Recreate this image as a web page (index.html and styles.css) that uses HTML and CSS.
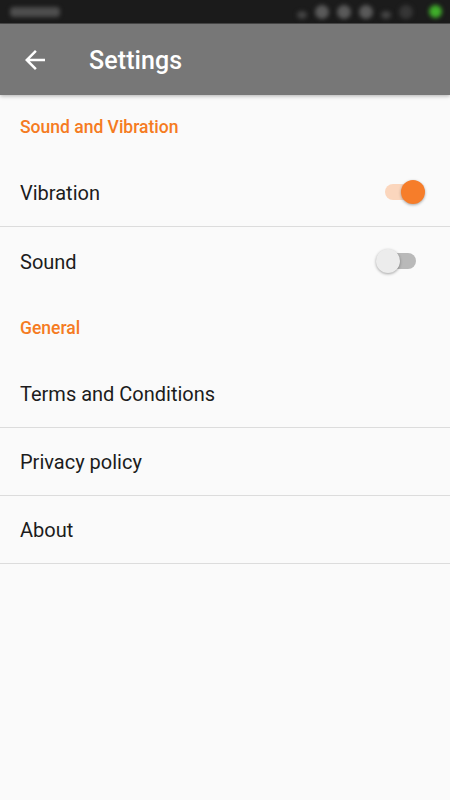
FILE: index.html
```html
<!DOCTYPE html>
<html>
<head>
<meta charset="utf-8">
<link rel="stylesheet" href="styles.css">
</head>
<body>
<div class="statusbar">
  <div class="sb-left"><span class="blob time"></span></div>
  <div class="sb-right">
    <span class="blob dot small"></span>
    <span class="blob dot"></span>
    <span class="blob dot"></span>
    <span class="blob dot"></span>
    <span class="blob dot small"></span>
    <span class="blob dot dim"></span>
    <span class="blob dot green"></span>
  </div>
</div>
<header class="toolbar">
  <span class="nav-icon">
    <svg width="30" height="30" viewBox="0 0 24 24"><path fill="#fff" d="M20 11H7.83l5.59-5.59L12 4l-8 8 8 8 1.41-1.41L7.83 13H20v-2z"/></svg>
  </span>
  <h1 class="title">Settings</h1>
</header>
<main class="list">
  <div class="section-header">Sound and Vibration</div>
  <div class="row divided">
    <span class="label">Vibration</span>
    <span class="switch on"><span class="track"></span><span class="thumb"></span></span>
  </div>
  <div class="row plain">
    <span class="label">Sound</span>
    <span class="switch"><span class="track"></span><span class="thumb"></span></span>
  </div>
  <div class="section-header">General</div>
  <div class="row divided"><span class="label">Terms and Conditions</span></div>
  <div class="row divided"><span class="label">Privacy policy</span></div>
  <div class="row divided"><span class="label">About</span></div>
</main>
</body>
</html>
```
FILE: styles.css
```css
* { box-sizing: border-box; }
html, body {
  margin: 0;
  padding: 0;
  background: #fafafa;
  font-family: Roboto, "Liberation Sans", sans-serif;
}
body { width: 450px; min-height: 800px; }

.statusbar {
  height: 24px;
  background: #1b1b1b;
  border-bottom: 1px solid #4a4a4a;
  display: flex;
  justify-content: space-between;
  align-items: center;
  padding: 0 8px 0 10px;
  overflow: hidden;
}
.sb-right { display: flex; align-items: center; gap: 8px; }
.blob { display: inline-block; filter: blur(2px); }
.time { width: 50px; height: 10px; background: #4e4e4e; border-radius: 4px; }
.dot { width: 14px; height: 14px; border-radius: 50%; background: #5a5a5a; }
.dot.small { width: 10px; height: 8px; margin-top: 6px; background: #444; }
.dot.dim { background: #363636; }
.dot.green { background: #3fae2a; width: 13px; height: 13px; margin-left: 8px; }

.toolbar {
  height: 71px;
  background: #777777;
  display: flex;
  align-items: center;
  padding-left: 20px;
  padding-top: 1px;
  box-shadow: 0 1px 4px rgba(0,0,0,0.3);
  position: relative;
  z-index: 1;
}
.nav-icon { width: 30px; height: 30px; display: flex; }
.title {
  margin: 1px 0 0 39px;
  font-size: 25px;
  font-weight: 500;
  color: #ffffff;
  letter-spacing: 0.1px;
}

.section-header {
  height: 64px;
  display: flex;
  align-items: center;
  padding-left: 20px;
  font-size: 17.5px;
  font-weight: 500;
  color: #f57b22;
}

.row {
  height: 68px;
  display: flex;
  align-items: center;
  justify-content: space-between;
  padding: 0 24px 0 20px;
}
.row.plain { height: 69px; }
.row.divided { border-bottom: 1px solid #dcdcdc; }
.label { font-size: 20px; color: #1c1c1c; }

.switch {
  position: relative;
  width: 50px;
  height: 25px;
}
.track {
  position: absolute;
  left: 9px;
  top: 4px;
  width: 31px;
  height: 16px;
  border-radius: 8px;
  background: #b9b9b9;
}
.thumb {
  position: absolute;
  left: 0;
  top: 0;
  width: 24px;
  height: 24px;
  border-radius: 50%;
  background: #ececec;
  box-shadow: 0 1px 3px rgba(0,0,0,0.35);
}
.switch.on .track { background: #fbd6bd; }
.switch.on .thumb { left: 25px; background: #f67d2a; }
```
